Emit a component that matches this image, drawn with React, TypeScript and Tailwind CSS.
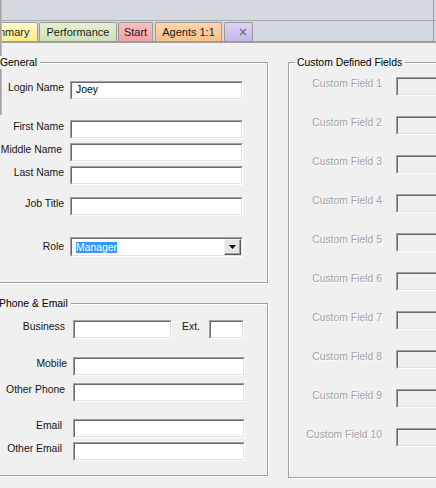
import React from 'react';

interface FieldProps {
  className: string;
  disabled?: boolean;
  children?: React.ReactNode;
}

// sunken 3D text box, Windows classic style
const Field: React.FC<FieldProps> = ({ className, disabled, children }) => (
  <div className={`shrink-0 border border-t-[#a0a0a0] border-l-[#a0a0a0] border-b-white border-r-white ${className}`}>
    <div
      className={`flex h-full items-center border border-t-[#696969] border-l-[#696969] border-b-[#e3e3e3] border-r-[#e3e3e3] ${
        disabled ? 'bg-[#f0f0f0]' : 'bg-white'
      }`}
    >
      {children}
    </div>
  </div>
);

const GroupBox: React.FC<{ title: string; className: string; legendClass: string; children: React.ReactNode }> = ({
  title,
  className,
  legendClass,
  children,
}) => (
  <div className={`relative border border-[#a0a0a0] shadow-[inset_1px_1px_0_#fff,1px_1px_0_#fff] ${className}`}>
    <span className={`absolute top-[-7px] bg-[#f0f0f0] leading-[13px] text-black ${legendClass}`}>{title}</span>
    {children}
  </div>
);

const tabs = [
  { label: 'Summary', cls: 'ml-[-26px] w-[64px] from-[#fffbcf] to-[#ffeb85]' },
  { label: 'Performance', cls: 'ml-[1px] w-[78px] from-[#e4efd2] to-[#d1e1b6]' },
  { label: 'Start', cls: 'ml-[1px] w-[35px] from-[#f8c0c0] to-[#f2a2a2]' },
  { label: 'Agents 1:1', cls: 'ml-[2px] w-[67px] from-[#fdd6ae] to-[#fbbf86]' },
];

const generalRows = [
  { label: 'Login Name', mt: 'mt-0', value: 'Joey' },
  { label: 'First Name', mt: 'mt-[20px]' },
  { label: 'Middle Name', mt: 'mt-[4px]', pr: 'pr-[2px]' },
  { label: 'Last Name', mt: 'mt-[4px]' },
  { label: 'Job Title', mt: 'mt-[12px]' },
];

const phoneRows = [
  { label: 'Mobile', mt: 'mt-[18px]', pr: 'pr-[1px]' },
  { label: 'Other Phone', mt: 'mt-[7px]', pr: 'pr-[3px]' },
  { label: 'Email', mt: 'mt-[17px]', pr: 'pr-[6px]' },
  { label: 'Other Email', mt: 'mt-[4px]', pr: 'pr-[6px]' },
];

const customFields = Array.from({ length: 10 }, (_, i) => `Custom Field ${i + 1}`);

export default function App() {
  return (
    <div className="relative h-[488px] w-[436px] overflow-hidden bg-[#f0f0f0] font-['Liberation_Sans',Arial,sans-serif] text-[10.4px] text-[#151515]">
      {/* title area + tab strip */}
      <div className="h-[21px] border-b border-[#a7abb3] bg-[#d4d8df]" />
      <div className="flex h-[20px] items-end bg-[#d4d8df] text-[11px] text-[#1a1a1a]">
        {tabs.map((t) => (
          <div
            key={t.label}
            className={`flex h-[19px] shrink-0 items-center justify-center whitespace-nowrap rounded-t-[2px] border border-b-0 border-[#9a9a9a] bg-linear-to-b leading-none ${t.cls}`}
          >
            {t.label}
          </div>
        ))}
        <div className="ml-[2px] flex h-[19px] w-[29px] shrink-0 items-center justify-end rounded-t-[2px] border border-b-0 border-[#9a9a9a] bg-linear-to-b from-[#ddd3f6] to-[#c6b6ec] pr-[5px]">
          <svg width="8" height="8" viewBox="0 0 8 8">
            <path d="M1 1L7 7M7 1L1 7" stroke="#707070" strokeWidth="1.3" />
          </svg>
        </div>
      </div>
      <div className="h-[2px] bg-[#9d9d9d]" />

      {/* window edges */}
      <div className="absolute left-0 top-0 h-[115px] w-[2px] bg-linear-to-r from-[#9a9a9a] to-[#c4c4c4]" />
      <div className="absolute left-[433px] top-0 h-[41px] w-[1px] bg-[#9a9a9a]" />

      <div className="flex items-start pt-[19px]">
        {/* left column */}
        <div className="ml-[-10px] flex w-[278px] shrink-0 flex-col">
          <GroupBox title="General" className="h-[221px] pt-[18px]" legendClass="left-[9px] pr-[3px]">
            {generalRows.map((r) => (
              <div key={r.label} className={`flex items-start ${r.mt}`}>
                <span className={`w-[73px] whitespace-nowrap text-right leading-[13px] ${r.pr ?? ''}`}>{r.label}</span>
                <Field className="ml-[6px] h-[19px] w-[173px]">
                  {r.value && <span className="pl-[4px] leading-none text-black">{r.value}</span>}
                </Field>
              </div>
            ))}
            <div className="mt-[21px] flex items-start">
              <span className="w-[73px] pt-[3px] text-right leading-[13px]">Role</span>
              <Field className="ml-[6px] h-[20px] w-[173px]">
                <div className="flex flex-1 items-center pl-[4px]">
                  <span className="bg-[#3399ff] leading-[11px] text-white">Manager</span>
                </div>
                <div className="flex h-full w-[17px] items-center justify-center border border-t-[#f4f4f4] border-l-[#f4f4f4] border-b-[#5a5a5a] border-r-[#5a5a5a] bg-[#e6e6e6] shadow-[inset_-1px_-1px_0_#a0a0a0]">
                  <svg width="7" height="4" viewBox="0 0 7 4">
                    <path d="M0 0H7L3.5 4Z" fill="#000" />
                  </svg>
                </div>
              </Field>
            </div>
          </GroupBox>

          <GroupBox title="Phone & Email" className="mt-[20px] h-[173px] pt-[16px]" legendClass="left-[8px] pr-[3px]">
            <div className="flex items-start">
              <span className="w-[77px] whitespace-nowrap pr-[3px] text-right leading-[13px]">Business</span>
              <Field className="ml-[5px] h-[19px] w-[99px]" />
              <span className="ml-[10px] leading-[13px]">Ext.</span>
              <Field className="ml-[9px] h-[19px] w-[35px]" />
            </div>
            {phoneRows.map((r) => (
              <div key={r.label} className={`flex items-start ${r.mt}`}>
                <span className={`w-[77px] whitespace-nowrap text-right leading-[13px] ${r.pr}`}>{r.label}</span>
                <Field className="ml-[5px] h-[19px] w-[172px]" />
              </div>
            ))}
          </GroupBox>
        </div>

        {/* right column */}
        <GroupBox
          title="Custom Defined Fields"
          className="ml-[20px] h-[416px] w-[170px] shrink-0 pt-[14px]"
          legendClass="left-[6px] pl-[2px] pr-[3px]"
        >
          {customFields.map((name, i) => (
            <div key={name} className={`flex items-start ${i === 0 ? 'mt-0' : 'mt-[20px]'}`}>
              <span className="w-[93px] whitespace-nowrap text-right leading-[13px] text-[#a3a3a3] [text-shadow:1px_1px_0_#fff]">
                {name}
              </span>
              <Field disabled className="ml-[14px] h-[19px] w-[60px]" />
            </div>
          ))}
        </GroupBox>
      </div>
    </div>
  );
}
